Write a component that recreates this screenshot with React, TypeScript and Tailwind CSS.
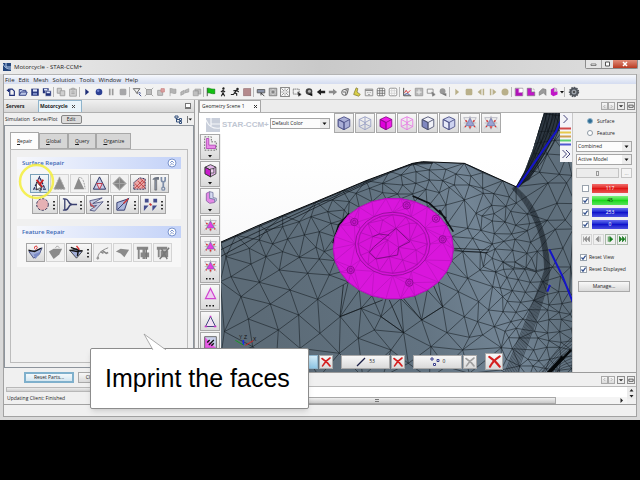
import React, { useState } from 'react';

type Pt = [number, number];

/* ---------- mesh ---------- */

// Bowyer-Watson triangulation
const triangulate = (pts: Pt[]) => {
  const all: Pt[] = [...pts, [-9000, -9000], [9000, -9000], [500, 12000]];
  const n = pts.length;
  const circle = (a: number, b: number, c: number) => {
    const [ax, ay] = all[a];
    const [bx, by] = all[b];
    const [cx, cy] = all[c];
    const d = 2 * (ax * (by - cy) + bx * (cy - ay) + cx * (ay - by)) || 0.001;
    const A = ax * ax + ay * ay, B = bx * bx + by * by, C = cx * cx + cy * cy;
    const x = (A * (by - cy) + B * (cy - ay) + C * (ay - by)) / d;
    const y = (A * (cx - bx) + B * (ax - cx) + C * (bx - ax)) / d;
    return { v: [a, b, c], x, y, r: (ax - x) ** 2 + (ay - y) ** 2 };
  };
  let tris = [circle(n, n + 1, n + 2)];
  for (let i = 0; i < n; i++) {
    const [px, py] = all[i];
    const edges: Record<string, number[]> = {};
    tris = tris.filter((t) => {
      if ((px - t.x) ** 2 + (py - t.y) ** 2 >= t.r) return true;
      [[0, 1], [1, 2], [2, 0]].forEach(([s, e]) => {
        const a = t.v[s], b = t.v[e];
        const key = Math.min(a, b) + '-' + Math.max(a, b);
        if (edges[key]) delete edges[key];
        else edges[key] = [a, b];
      });
      return false;
    });
    Object.values(edges).forEach(([a, b]) => tris.push(circle(a, b, i)));
  }
  // each edge once, so that shared edges are not painted twice
  const seen = new Set<string>();
  let d = '';
  tris.filter((t) => t.v.every((k) => k < n)).forEach((t) => {
    [[0, 1], [1, 2], [2, 0]].forEach(([s, e]) => {
      const a = Math.min(t.v[s], t.v[e]), b = Math.max(t.v[s], t.v[e]);
      if (seen.has(a + '-' + b)) return;
      seen.add(a + '-' + b);
      d += 'M' + all[a].map((q) => Math.round(q)).join(' ') + 'L' + all[b].map((q) => Math.round(q)).join(' ');
    });
  });
  return d;
};

const ring = (cx: number, cy: number, rx: number, ry: number, n: number): Pt[] =>
  Array.from({ length: n }, (_, i) => {
    const a = (i / n) * Math.PI * 2;
    return [cx + rx * Math.cos(a), cy + ry * Math.sin(a)];
  });

const grid = (x0: number, y0: number, x1: number, y1: number, dx: number, dy: number, keep: (x: number, y: number) => boolean): Pt[] => {
  const out: Pt[] = [];
  let row = 0;
  for (let y = y0; y < y1; y += dy, row++) {
    for (let x = x0 + (row % 2) * (dx / 2); x < x1; x += dx) {
      const jx = x + Math.sin(x * 12.9 + y * 7.3) * dx * 0.2;
      const jy = y + Math.sin(x * 3.7 + y * 17.1) * dy * 0.25;
      if (keep(jx, jy)) out.push([jx, jy]);
    }
  }
  return out;
};

const toPoints = (p: Pt[]) => p.map((q) => q.map((v) => Math.round(v)).join(',')).join(' ');

const disc = ring(532, 266, 180, 151, 26);

const bodyPoints: Pt[] = [
  [13, 247], [60, 226], [130, 195], [200, 166], [300, 125], [380, 90], [450, 62], [520, 34], [590, 10], [650, 5], [745, 10], [800, 38], [860, 62], [900, 80],
  [555, 45], [600, 35], [640, 30], [690, 28], [720, 42], [765, 48], [500, 70], [460, 85], [420, 100], [560, 75], [600, 70], [640, 60], [680, 62], [715, 75],
  [500, 98], [545, 102], [590, 102], [630, 88], [670, 98], [700, 82], [745, 120], [690, 135], [780, 160], [755, 205], [770, 235], [760, 75], [800, 85],
  [150, 210], [200, 200], [250, 185], [285, 170], [335, 155], [385, 150], [130, 240], [215, 237], [265, 225], [310, 215], [345, 190], [350, 120], [400, 125], [380, 180],
  [30, 290], [100, 265], [170, 252], [150, 290], [105, 312], [200, 275], [130, 367], [190, 330], [250, 292], [75, 410], [45, 350], [13, 365], [163, 432], [222, 390],
  [275, 340], [305, 418], [248, 465], [97, 477], [25, 515], [187, 510], [312, 520], [252, 565], [373, 470], [370, 580], [110, 560], [310, 297], [300, 262], [340, 345],
  [435, 445], [495, 470], [427, 535], [475, 510], [563, 518], [617, 480], [680, 440], [727, 395], [652, 362], [693, 518], [645, 560], [577, 610], [745, 470], [755, 355],
  [802, 320], [788, 425], [830, 380], [818, 450], [860, 410], [785, 485], [760, 532], [800, 525], [525, 570], [740, 570], [835, 500], [810, 280], [740, 275],
  [13, 600], [180, 620], [310, 650], [440, 650], [60, 650], [500, 650], [690, 620], [640, 655], [760, 640], [325, 275],
  ...grid(800, 105, 985, 330, 42, 28, (x, y) => x < 905 + (y - 80) * 0.45),
  ...grid(860, 330, 1000, 640, 36, 30, (x, y) => x < 1000 - (y - 330) * 0.42),
  ...grid(985, 80, 1090, 400, 56, 46, (x, y) => x > 940 + (y - 80) * 0.28),
  ...grid(880, 400, 1090, 660, 36, 28, (x, y) => x > 1020 - (y - 330) * 0.42),
  ...grid(935, -140, 1090, 80, 44, 44, () => true),
  ...disc,
];

const bodyMesh = triangulate(bodyPoints);
const discMesh = triangulate([
  ...disc,
  ...ring(530, 252, 112, 95, 12),
  ...ring(415, 186, 10, 9, 4), ...ring(572, 136, 10, 9, 4), ...ring(680, 238, 11, 10, 4), ...ring(580, 368, 11, 10, 4), ...ring(404, 330, 11, 10, 4),
]);
const hubMesh = triangulate([
  ...ring(530, 252, 104, 88, 16),
  [470, 230], [490, 222], [460, 275], [480, 295], [520, 290], [548, 262], [582, 240], [540, 205], [515, 240], [500, 180], [580, 190], [600, 270], [560, 300],
]);

const foldLines = Array.from({ length: 9 }, (_, i) => {
  const k = i * 8;
  return `M${896 - i} ${78 + i}C${955 - k / 4} ${120 + i * 2} ${996 - k / 5} 215 ${1002 - k / 4} 330C${990 - k / 2} 420 ${945 - k / 2} 520 ${900 - k * 0.6} 650`;
}).join('');
const cornerLines = Array.from({ length: 9 }, (_, i) => `M1090 ${515 + i * 12}C1040 ${550 + i * 9} 1010 ${595 + i * 4} ${955 + i * 11} 650`).join('');
const towerLines = Array.from({ length: 7 }, (_, i) => `M${985 + i * 9} -145C${962 + i * 12} -60 ${925 + i * 6} 40 ${897 + i * 2} 80`).join('');
const edgeLines = [0, 1, 2].map((i) => `M13 ${250 + i * 20}C150 ${189 + i * 12} 300 ${129 + i * 6} 450 ${63 + i * 4}S590 ${9 + i * 3} 650 ${6 + i * 2}`).join('');

const Scene: React.FC = () => (
  <svg className="absolute inset-0 h-full w-full" viewBox="198 113 376 259" preserveAspectRatio="xMinYMin slice" aria-label="Geometry scene">
    <defs>
      <linearGradient id="sky" x1="0" y1="0" x2="0" y2="1">
        <stop offset="0" stopColor="#fff" />
        <stop offset="1" stopColor="#f0f0f2" />
      </linearGradient>
      <linearGradient id="steel" gradientUnits="userSpaceOnUse" x1="150" y1="500" x2="980" y2="250">
        <stop offset="0" stopColor="#5c6b77" />
        <stop offset="0.5" stopColor="#627381" />
        <stop offset="0.8" stopColor="#738595" />
        <stop offset="1" stopColor="#5f6f7c" />
      </linearGradient>
      <clipPath id="body">
        <path d="M13 247L130 195L300 125L450 62L590 10L620 5L745 10L762 16L900 80L925 35L950 -30L985 -145L1100 -145V660H13Z" />
      </clipPath>
    </defs>
    <rect x="198" y="113" width="376" height="100" fill="#fff" />
    <rect x="198" y="160" width="376" height="212" fill="url(#sky)" />
    <g transform="translate(215 160) scale(.3333)" fill="none">
      <g clipPath="url(#body)">
        <rect x="0" y="-150" width="1100" height="820" fill="url(#steel)" />
        <path d="M985 -145L900 80L940 60L1060 -145Z" fill="#2c3640" />
        <path d={bodyMesh} stroke="#161c22" strokeWidth="2" strokeOpacity=".85" />
        <path d={foldLines + cornerLines} stroke="#141a20" strokeWidth="2" strokeOpacity=".7" />
        <path d={towerLines + edgeLines} stroke="#0b0f13" strokeWidth="2" />
        <path d="M1065 570L1000 640M1040 590L985 650" stroke="#05080a" strokeWidth="7" />
        <path d="M670 150L712 215M351 250L368 195L400 160M590 108L640 130L690 175" stroke="#0c1014" strokeWidth="5" />
        <path d="M715 265L820 270M715 272L815 278M500 420L372 470L382 375M520 420L563 518L495 470M562 415L617 480L680 440L650 370" stroke="#0c1014" strokeWidth="2" />
        <path d="M1040 -130L1020 -85L904 82M1000 268L1040 350L1072 430M1002 375L994 395" stroke="#1414c8" strokeWidth="6" />
      </g>
      <path d="M13 247L130 195L300 125L450 62L590 10L620 5L745 10L900 80" stroke="#0a0d10" strokeWidth="3" />
      <polygon points={toPoints(disc)} fill="#d916dc" stroke="#c010c8" strokeWidth="3" />
      <path d={discMesh} stroke="#b812bd" strokeWidth="2" />
      <polygon points={toPoints(ring(530, 252, 112, 95, 24))} fill="#d714d9" stroke="#9a0fa0" strokeWidth="3" />
      <polygon points={toPoints(ring(530, 252, 104, 88, 20))} stroke="#a510aa" strokeWidth="2" />
      <path d={hubMesh} stroke="#a00e a6" strokeWidth="2" />
      <path d={hubMesh} stroke="#a00ea6" strokeWidth="2" strokeOpacity=".8" />
      <path d="M470 230L490 222L520 226M540 205L582 245L548 262L545 285L480 297L460 278L472 262Z" stroke="#820c88" strokeWidth="3" />
      {([[415, 186], [572, 136], [680, 238], [580, 368], [404, 330], [660, 176]] as Pt[]).map(([x, y]) => (
        <g key={x} stroke="#920c98" strokeWidth="3">
          <circle cx={x} cy={y} r="11" />
          <circle cx={x} cy={y} r="5" />
        </g>
      ))}
      <g strokeWidth="3">
        <path d="M82 555V540" stroke="#1a2ae0" strokeWidth="5" />
        <path d="M82 555L58 541" stroke="#159a20" />
        <path d="M88 556L112 542" stroke="#c22" />
      </g>
    </g>
    <g fontFamily="Liberation Sans, sans-serif" fontSize="5" fill="#111">
      <text x="238" y="339">Y</text>
      <text x="243" y="339">Z</text>
      <text x="252" y="341">X</text>
    </g>
  </svg>
);

/* ---------- icons ---------- */

const navy = '#1f2f78';
const grey = '#9a9a9a';
const tan = '#b9b08a';

const icons: Record<string, React.ReactNode> = {
  fresh: <g fill="none" stroke={navy} strokeWidth="1.4"><path d="M4.500 2.500h3l2.500 2.500v5h-5.500z" /><path d="M1 4h4M3 2v4" /></g>,
  open: <g stroke={navy} fill="#b9c4e4"><path d="M1.500 10V3h3l1 1h4v2" /><path d="M1.500 10L3.500 6h7.500L9.500 10z" /></g>,
  save: <g fill={navy}><path d="M1.500 2h9v8.500h-9z" /><path d="M3.500 2.800h5v2.700h-5z" fill="#dfe6fa" /><path d="M3.500 7h5v2.500h-5z" fill="#7f8fc8" /></g>,
  saveAll: <g><path d="M1 1.500h7v6H1z" fill={navy} /><path d="M2.500 2.200h4v2h-4z" fill="#dfe6fa" /><path d="M4 4.500h7v6.500H4z" fill={navy} stroke="#eee" strokeWidth=".6" /><path d="M5.500 5.500h4v2h-4z" fill="#dfe6fa" /></g>,
  copy: <g fill="#cfcfcf" stroke={grey}><path d="M1.500 1.500h5v6h-5z" /><path d="M5 4.500h5.500v6H5z" /></g>,
  paste: <g fill="#d5d5d5" stroke={grey}><path d="M2 2.500h8v8.500H2z" /><path d="M4.500 1.500h3v2h-3zM4 6h4M4 8h4" /></g>,
  play: <path d="M4 2v8l4.500-4z" fill={navy} />,
  ball: <g><circle cx="6" cy="6" r="4" fill="#2c4094" /><circle cx="5" cy="4.500" r="1.500" fill="#6d80cc" /></g>,
  pause: <path d="M3.500 2h2v8h-2zM7 2h2v8H7z" fill={grey} />,
  stop: <rect x="2" y="2" width="8" height="8" rx="1.500" fill="#a6a6a8" />,
  filter: <g fill="none" stroke="#555"><path d="M1.500 2h8L6.500 6v2L5 7V6z" /><path d="M8 8l3 3M8 6.500l2.500 1" stroke={navy} /></g>,
  crop: <g fill="#bbb" stroke={grey}><path d="M3 3h6v6H3z" /><path d="M1 1l2.500 2.500M11 1L8.500 3.500M1 11l2.500-2.500M11 11L8.500 8.500" /></g>,
  boxRed: <g fill="#c4c4c4" stroke={grey}><path d="M2 4h6v6H2z" /><path d="M6 2h4v4H6z" fill="#dba0a0" stroke="#c88" /></g>,
  flagGrey: <g fill="#b4b4b4" stroke={grey} strokeWidth=".8"><path d="M2.500 1.500V11M2.500 2c3-1 3 1.500 7 .5v5c-4 1-4-1-7-.5" /></g>,
  slices: <g fill="#b9b9b9" stroke={grey} strokeWidth=".8"><path d="M1 10V6l4-2v4zM6 7V4l4.500-2v4z" /></g>,
  cubeGrey: <g fill="#c0c0c0" stroke={grey} strokeWidth=".8"><path d="M1.500 4.500h6v6h-6zM3.500 2.500h7v6h-3v-4h-4z" /></g>,
  flag: <g><path d="M1.500 1v10" stroke="#333" /><path d="M2 1.500c3-.5 3 1.500 8.500 1v5.500C6 8.500 5 6.500 2 7z" fill="#12c212" stroke="#0a7a0a" strokeWidth=".8" /></g>,
  walk: <g stroke="#222" fill="none" strokeWidth="1.300"><circle cx="6.500" cy="1.800" r=".8" fill="#222" /><path d="M6 3.500v3.500l2 4M6 7l-2 4M3.500 6L6 4l2.500 2" /></g>,
  run: <g stroke="#222" fill="none" strokeWidth="1.400"><circle cx="9" cy="2.500" r=".8" fill="#222" /><path d="M8 4L5.500 7l2.500 1v2.500M5.500 7L4 9H1M4 4.500l4-.5 2.500 2" /></g>,
  stopRed: <rect x="2" y="2" width="8.500" height="8.500" fill="#b58a8c" stroke="#967074" strokeWidth=".8" />,
  camera: <g stroke="#555"><path d="M1.500 3h9v4h-9z" fill="#8a93a8" /><path d="M6 7l4 4M6 7v3" fill="none" stroke="#222" /></g>,
  fit: <g fill="#bbb" stroke="#777"><path d="M1.500 1.500h9v9h-9z" /><path d="M6 2.500v7M2.500 6h7" stroke="#fff" strokeWidth="2" /><path d="M6 3v6M3 6h6" stroke="#444" /></g>,
  burst: <g fill="none" stroke="#333"><path d="M.5.500h11v11H.5z" fill="#f8f8f8" stroke="#666" /><path d="M2 2l3 3M10 2L7 5M2 10l3-3M10 10L7 7M6 2v2M6 8v2M2 6h2M8 6h2" strokeDasharray="1 .6" /></g>,
  marquee: <g fill="none" stroke="#555"><path d="M1.500 2.500h7v6h-7z" strokeDasharray="1.500 .8" /><path d="M7 6l4 3-3 2z" fill="#111" /></g>,
  spin: <g><circle cx="6" cy="5.500" r="4" fill="#444" /><circle cx="6.500" cy="5" r="1.800" fill="#b6b6b6" /><path d="M5 9l5 2V7.500z" fill="#111" /></g>,
  left: <path d="M1 6l5-4v2.500h5v3H6V10z" fill="#222" />,
  right: <path d="M11 6L6 2v2.500H1v3h5V10z" fill="#8b8b8b" />,
  rotate: <g fill="none" stroke="#666" strokeWidth="1.200"><circle cx="5.500" cy="6.500" r="3.500" /><path d="M3 6h4v4M5 3l5-1-1 5" /></g>,
  broom: <g><path d="M5 1l2 1-1 4 4 3-2 2-6-2 1-3z" fill="#d9cf48" stroke="#77702a" strokeWidth=".8" /></g>,
  calendar: <g fill="#ececec" stroke="#888"><path d="M1.500 2.500h9v8h-9z" /><path d="M1.500 4h9" strokeWidth="1.500" /><path d="M4 6l1 1M8 6L7 7M5 9h2" /></g>,
  table: <g fill="#fff" stroke="#666"><rect x="1.500" y="1.500" width="9" height="9" rx="1.500" /><path d="M1.500 4.500h9M1.500 7.500h9M4.500 1.500v9M7.500 1.500v9" /></g>,
  tablePale: <g fill="#fff" stroke="#777"><rect x="1.500" y="1.500" width="9" height="9" rx="1.500" /><path d="M1.500 4.500h9M1.500 7.500h9M4.500 1.500v9M7.500 1.500v9" stroke="#cfcfcf" /></g>,
  plot: <g fill="none" stroke="#333"><path d="M2 1v9.500h9" /><path d="M3 7l2-3 2 3 3-3" stroke="#c22" /><path d="M3 9l3-1 3 1" stroke={navy} /></g>,
  fitGrey: <g fill="#b8b8b8" stroke="#999"><path d="M1.500 1.500h9v9h-9z" /><path d="M6 3v6M3 6h6" stroke="#e8e8e8" strokeWidth="1.500" /></g>,
  marqueeGrey: <g fill="none" stroke="#888"><path d="M1.500 2.500h7v5h-7z" /><path d="M7 6l4 3-3 2z" fill="#777" /></g>,
  spinGrey: <g><circle cx="5.500" cy="5" r="3.500" fill="#999" /><path d="M4 8l6 3V7.500z" fill="#777" /></g>,
  tanPlay: <path d="M4 2v8l4.500-4z" fill={tan} />,
  tanStop: <rect x="2" y="2" width="8" height="8" rx="1.500" fill={tan} />,
  tanBack: <path d="M6.500 2v8L2 6zM8 2h1.800v8H8z" fill={tan} />,
  tanFwd: <path d="M5.500 2v8L10 6zM2.200 2H4v8H2.200z" fill={tan} />,
  tanBall: <circle cx="6" cy="6" r="4.200" fill={tan} />,
  magA: <g><path d="M1.500 1.500h9v9h-9z" fill="#e9b6ec" stroke="#777" strokeWidth=".8" /><path d="M2 2h3.500v5H10v3.500H2z" fill="#b015b8" /><path d="M6.500 2h4v4h-4z" fill="#fff" /></g>,
  magB: <g><path d="M1.500 1.500h5V6h4v4.500h-9z" fill="#c117c8" stroke="#777" strokeWidth=".8" /><path d="M6.500 2.500h3.500v3" fill="none" stroke="#999" strokeDasharray="1 1" /></g>,
  blob: <path d="M1.500 10V6l4-4 4 1v7l-3-3z" fill="#9b9b9b" stroke="#777" strokeWidth=".8" />,
  magC: <g><path d="M1 3l4-2v5l4-1v4l-5 2-3-2z" fill="#c117c8" /><path d="M5 1l3 1v3L5 6z" fill="#eab8ee" stroke="#888" strokeWidth=".6" /></g>,
  gear: <g><circle cx="6" cy="6" r="4.400" fill="#50555c" stroke="#50555c" strokeWidth="1.600" strokeDasharray="1.500 1" /><circle cx="6" cy="6" r="2.500" fill="#9aa0a8" /><circle cx="6" cy="6" r="1" fill="#333" /></g>,
};

const Icon: React.FC<{ name: string; size?: string }> = ({ name, size = 'h-[10px] w-[10px]' }) => (
  <svg className={size} viewBox="0 0 12 12" aria-hidden="true">{icons[name]}</svg>
);

const toolGroups = [
  ['fresh', 'open', 'save', 'saveAll'],
  ['copy', 'paste'],
  ['play', 'ball', 'pause', 'stop'],
  ['filter', 'crop', 'boxRed', 'flagGrey', 'slices', 'cubeGrey'],
  ['flag', 'walk', 'run', 'stopRed'],
  ['camera', 'fit', 'burst', 'marquee', 'spin', 'left', 'right', 'rotate', 'broom', 'calendar', 'table', 'tablePale'],
  ['plot', 'fitGrey', 'marqueeGrey', 'spinGrey'],
  ['tanPlay', 'tanStop', 'tanBack', 'tanFwd', 'tanBall'],
  ['magA', 'magB', 'blob', 'magC'],
];

// 18x18 drawings for the repair buttons
const repairIcons: Record<string, React.ReactNode> = {
  triX: <g fill="#c9d0e8" stroke="#222a5a"><path d="M9 2L3 15h12z" strokeDasharray="3 1" strokeWidth="1.300" /><path d="M6 5l6 8M13 5l-6 8" stroke="#c22" strokeWidth="2" /></g>,
  triGrey: <path d="M9 2L3 15h12z" fill="#8b8b8b" stroke="#aaa" strokeDasharray="2 1" />,
  triGreyX: <g><path d="M8 3L3 15h11z" fill="#8b8b8b" /><path d="M8 3c4-2 6 4 7 12" fill="none" stroke="#999" strokeDasharray="2 1" /></g>,
  triSplit: <g fill="#c3cbe6" stroke="#222a5a"><path d="M9 2L2.500 15h13z" /><path d="M6 9h6L9 15z" fill="#ecd0dc" stroke="#b34" /></g>,
  diamond: <g><path d="M9 2l7 7-7 7-7-7z" fill="#858585" stroke="#a8a8a8" /><path d="M2 9h14M9 2v14" stroke="#a5a5a5" /></g>,
  patch: <g><path d="M3 15V8l6-5 6 1v11z" fill="#e9a9a9" stroke="#222a5a" strokeDasharray="2 1" /><path d="M4 14l9-9M7 14l8-8M11 14l4-4M4 9l5 5M7 6l8 8M10 4l5 5" stroke="#b33" strokeWidth=".8" /></g>,
  tools: <g><path d="M4 5h2v11H4z" fill="#8c96a8" stroke="#555" strokeWidth=".6" /><path d="M1.500 5c1-3 4-3 7-3v3H3z" fill="#6c7482" /><path d="M11 2v3c0 3 4 3 4 0V2M13 7v6" fill="none" stroke="#7d8da8" strokeWidth="1.800" /><circle cx="13" cy="14.500" r="1.600" fill="none" stroke="#7d8da8" strokeWidth="1.400" /></g>,
  circle: <circle cx="9" cy="9" r="6.200" fill="#e5b1b4" stroke="#2b2d52" strokeDasharray="2.500 1.500" />,
  merge: <g fill="none" stroke="#3a4070"><path d="M2 3h2c5 0 3 6 8 6h5M2 15h2c5 0 3-6 8-6M4 3v12" strokeWidth="1.400" /></g>,
  zip: <g fill="#c6cbe0" stroke="#3a4070" strokeWidth=".8"><path d="M2 5l13-3-10 6 11-2-9 10-5-1 7-5-6 1z" /><path d="M2 7l4 4M2 9l5 3" stroke="#c33" /></g>,
  edge: <g><path d="M2 15V7l12-4-4 12z" fill="#aeb8dc" stroke="#30386c" /><path d="M3 14L15 2" stroke="#30386c" /><path d="M9 8l5-5" stroke="#c33" strokeWidth="1.500" /></g>,
  shapes: <g fill="#444c8c"><path d="M3 3h4v4H3zM12 3h4v4h-4zM2 10h5l-5 6zM16 10h-5v6z" /><path d="M8 8l2 2" stroke="#c33" strokeWidth="2" /></g>,
  fold: <g><path d="M2 8l7-1 7-3-3 7-6 4z" fill="#a3afd8" stroke="#30386c" strokeWidth=".8" /><path d="M1.500 6.500L8 8l7-3.500" stroke="#111" strokeWidth="1.400" fill="none" /><path d="M7 11l2 5 6-8z" fill="#7c8cc8" /><path d="M8 5V3l2-1 1 2-2 2" stroke="#d33" fill="none" /></g>,
  foldGrey: <g><path d="M2 8l5-3h9l-3 6-6 5z" fill="#8b8b8b" /><path d="M9 4l2-2 2 2" fill="none" stroke="#999" /></g>,
  foldRed: <g><path d="M2 7l7 8 6-7-6-3z" fill="#a3afd8" stroke="#222" strokeWidth=".8" /><path d="M1.500 6.500l8 1.500 6-1M3 3.500l8 3-1 6" stroke="#111" strokeWidth="1.500" fill="none" /><path d="M9 2l3 4" stroke="#d33" strokeWidth="1.500" /></g>,
  curve: <g fill="none" stroke="#888"><path d="M4 16c0-6 3-9 11-12" /><path d="M7 8l3 2M9 7l4 3 2-1" strokeWidth="1.600" /><circle cx="4" cy="15" r="1" /></g>,
  leaf: <path d="M2 8l5-3 9 1-5 8-4-4z" fill="#8b8b8b" />,
  caliper: <g fill="#868686"><path d="M3 3h12v3H3zM4 6h2v10H4zM9 5h3v11H9zM7 9h9v5H7z" /><path d="M13 5v11" stroke="#777" strokeWidth="1.500" /></g>,
  caliperX: <g fill="#868686"><path d="M3 3h11v3H3zM4 6h2v8H4zM7 7h8v7H7z" /><path d="M6 16L16 4M8 5l6 11" stroke="#777" strokeWidth="1.500" /></g>,
};

/* ---------- shared bits ---------- */

const bevel = 'border border-[#a9a9a9] bg-linear-to-b from-[#f8f8f8] to-[#dadada]';

const RepairButton: React.FC<{ name: string; off?: boolean; menu?: boolean; active?: boolean }> = ({ name, off, menu, active }) => (
  <button
    aria-label={name}
    className={`flex h-[19px] items-center justify-center ${menu ? 'w-[26px]' : 'w-[19px]'} border ${off ? 'border-[#d4d4d4] bg-[#f2f2f2]' : active ? 'border-[#7aa0b8] bg-linear-to-b from-[#f4f8fa] to-[#cfe0ea]' : 'border-[#a4a4a4] bg-linear-to-b from-[#f8f8f8] to-[#dadada]'}`}
  >
    <svg className="h-[17px] w-[17px]" viewBox="0 0 18 18" aria-hidden="true">{repairIcons[name]}</svg>
    {menu && (
      <svg className="ml-px h-3 w-1" viewBox="0 0 4 12" fill="#333" aria-hidden="true">
        <path d="M1 2h2v1.500H1zM1 5.500h2V7H1zM1 9h2v1.500H1z" />
      </svg>
    )}
  </button>
);

const RepairGroup: React.FC<{ title: string; children: React.ReactNode }> = ({ title, children }) => (
  <section className="bg-[#f7f7f7] pb-[5px]">
    <div className="flex h-[12px] items-center justify-between bg-linear-to-r from-[#f7f8fc] to-[#c3d2f8] pr-1 pl-[5px]">
      <h2 className="text-[6px] leading-none font-semibold text-[#3c68b4]">{title}</h2>
      <button aria-label={'Collapse ' + title}>
        <svg className="h-[10px] w-[10px]" viewBox="0 0 10 10" fill="none" stroke="#7a94cc">
          <circle cx="5" cy="5" r="4" fill="#fff" />
          <path d="M3.200 4.800L5 3l1.800 1.800M3.200 7.200L5 5.400l1.800 1.800" />
        </svg>
      </button>
    </div>
    <div className="mt-[5px] flex flex-col items-center gap-[2px]">{children}</div>
  </section>
);

const Check: React.FC<{ id: string; on: boolean }> = ({ id, on }) => (
  <span className="grid h-[7px] w-[7px] shrink-0">
    <input id={id} type="checkbox" defaultChecked={on} className="peer col-start-1 row-start-1 h-[7px] w-[7px] appearance-none border border-[#9aa3ad] bg-white" />
    <svg className="pointer-events-none invisible col-start-1 row-start-1 h-[7px] w-[7px] peer-checked:visible" viewBox="0 0 7 7">
      <path d="M1.500 3.500L3 5.200L5.600 1.600" fill="none" stroke="#33508c" strokeWidth="1.200" />
    </svg>
  </span>
);

const Drop: React.FC<{ label: string; value: string; className: string }> = ({ label, value, className }) => (
  <span className={`grid items-center ${className}`}>
    <select aria-label={label} className="col-start-1 row-start-1 h-[11px] w-full appearance-none border border-[#a6a6a6] bg-[#fcfcfc] pl-px leading-none">
      <option>{value}</option>
    </select>
    <svg className="pointer-events-none col-start-1 row-start-1 mr-px h-[9px] w-[9px] justify-self-end bg-[#ececec]" viewBox="0 0 9 9">
      <path d="M2.500 3.500h4l-2 2.500z" fill="#111" />
    </svg>
  </span>
);

const WindowTools: React.FC = () => (
  <div className="flex items-center gap-[2px]">
    <div className="flex">
      {['M4.500 1.500L2.500 3.500l2 2', 'M2.500 1.500l2 2-2 2'].map((d) => (
        <button key={d} aria-label="Scroll tabs" className={`h-[8px] w-[7px] ${bevel}`}>
          <svg viewBox="0 0 7 7" fill="none" stroke="#999"><path d={d} /></svg>
        </button>
      ))}
    </div>
    <button aria-label="Tab list" className="h-[8px] w-[8px] border border-[#8d8d8d] bg-[#ececec]">
      <svg viewBox="0 0 7 7"><path d="M1 2.500h5L3.500 5z" fill="#222" /></svg>
    </button>
    <button aria-label="Maximize" className="h-[8px] w-[8px] border border-[#8d8d8d] bg-[#ececec]">
      <svg viewBox="0 0 7 7" fill="#fff" stroke="#444"><path d="M1 2.500h5v2.500h-5z" /></svg>
    </button>
  </div>
);

/* ---------- panels ---------- */

const menus = ['File', 'Edit', 'Mesh', 'Solution', 'Tools', 'Window', 'Help'];
const tabs = ['Repair', 'Global', 'Query', 'Organize'];

const LeftPanel: React.FC = () => {
  const [tab, setTab] = useState('Repair');
  return (
    <aside className="flex w-[191px] shrink-0 flex-col border-r border-[#a2a2a2]">
      <div className="flex h-[13px] items-end justify-between border-b border-[#b0b0b0] bg-linear-to-b from-[#f0f0f0] to-[#d8d8d8]">
        <div className="flex h-[12px] font-bold">
          <button className="w-[34px] pl-[2px] text-left">Servers</button>
          <button className="flex w-[44px] items-center gap-[3px] border border-b-0 border-[#8fb4cc] bg-[#eaf4fa] pl-px">
            Motorcycle
            <svg className="h-[5px] w-[5px]" viewBox="0 0 5 5" stroke="#444"><path d="M1 1l3 3M4 1L1 4" /></svg>
          </button>
        </div>
        <button aria-label="Minimize panel" className="mr-[3px] mb-[3px] h-[6px] w-[6px] border border-b-2 border-[#777] bg-white" />
      </div>
      <div className="flex h-[12px] items-center gap-[3px] bg-[#f0f0f0] pl-px">
        <span>Simulation</span>
        <span>Scene/Plot</span>
        <button className="h-[9px] w-[21px] rounded-xs border border-[#858585] bg-[#dcdcdc] leading-none">Edit</button>
        <span className="flex-1" />
        <button aria-label="Tree options" className="mr-[2px] h-[9px] w-[18px]">
          <svg viewBox="0 0 18 9" fill="none" stroke="#34507c">
            <path d="M1 1h3v2H1zM2.500 3v4h3M2.500 4.500h3M5.500 3.500h2v2h-2zM5.500 6.500h2v2h-2z" />
            <path d="M13.500 1v7" stroke="#777" />
            <path d="M14.500 3.500h3.500l-1.700 2z" fill="#111" stroke="none" />
          </svg>
        </button>
      </div>
      <div className="flex flex-1 flex-col border border-[#8d949c] bg-[#f0f0f0] px-[5px] pt-[6px] pb-1">
        <div className="flex h-[17px] items-end" role="tablist">
          {tabs.map((t) => (
            <button
              key={t}
              role="tab"
              aria-selected={t === tab}
              onClick={() => setTab(t)}
              className={`border border-[#a8a8a8] px-[6px] ${t === tab ? 'h-[17px] border-b-0 bg-[#fdfdfd]' : 'h-[16px] bg-[#d6d6d6]'}`}
            >
              <span className="underline">{t[0]}</span>{t.slice(1)}
            </button>
          ))}
        </div>
        <div className="flex flex-1 flex-col gap-[7px] border border-[#bcbcbc] px-[6px] pt-[7px]">
          <RepairGroup title="Surface Repair">
            <div className="flex gap-px">
              <RepairButton name="triX" active />
              <RepairButton name="triGrey" off />
              <RepairButton name="triGreyX" off />
              <RepairButton name="triSplit" />
              <RepairButton name="diamond" off />
              <RepairButton name="patch" />
              <RepairButton name="tools" />
            </div>
            <div className="flex gap-px">
              {['circle', 'merge', 'zip', 'edge', 'shapes'].map((n) => <RepairButton key={n} name={n} menu />)}
            </div>
          </RepairGroup>
          <RepairGroup title="Feature Repair">
            <div className="flex gap-px">
              <RepairButton name="fold" />
              <RepairButton name="foldGrey" off />
              <RepairButton name="foldRed" menu />
              <RepairButton name="curve" off />
              <RepairButton name="leaf" off />
              <RepairButton name="caliper" off />
              <RepairButton name="caliperX" off />
            </div>
          </RepairGroup>
        </div>
      </div>
      <div className="flex h-[19px] items-center gap-1 pl-5">
        <button className="h-[11px] w-[50px] border-2 border-[#7fb0cc] bg-linear-to-b from-[#f4f9fc] to-[#d3e6f0] leading-none">Reset Parts...</button>
        <button className={`h-[11px] w-[28px] leading-none ${bevel}`}>Close</button>
      </div>
      <div className="mx-[2px] h-[5px] border border-[#b8b8b8] bg-linear-to-b from-[#ececec] to-[#cfcfcf]" />
      <p className="flex h-[13px] items-center border-b border-[#a2a2a2] pl-[3px]">Updating Client: Finished</p>
    </aside>
  );
};

const cube = (fill: string, line: string, side?: string) => (
  <g stroke={line} strokeLinejoin="round" fill={fill}>
    <path d="M9 2l6.500 3v8L9 16.500L2.500 13V5z" />
    <path d="M2.500 5L9 8.500v8L2.500 13z" fill={side || fill} />
    <path d="M2.500 5L9 8.500L15.500 5M9 8.500v8" fill="none" />
  </g>
);
const wire = (line: string) => (
  <g stroke={line} fill="none" strokeLinejoin="round">
    <path d="M9 2l6.500 3v8L9 16.500L2.500 13V5zM2.500 5L9 8.500L15.500 5M9 8.500v8M9 2v8L2.500 13M9 10l6.500 3" />
  </g>
);
const starTri = (fill: string) => (
  <g>
    <path d="M2 3h14M2 3l7 13 7-13M2 15L9 3l7 12M9 1v4M2 9h14" fill="none" stroke="#a7a7b4" strokeWidth=".8" />
    <path d="M9 4l4.500 8h-9z" fill={fill} stroke="#5a5f98" strokeWidth=".6" />
    <path d="M4 6l1.500 1.500M14 6l-1.500 1.500M9 12.500V15M4.500 12.500l-1 1M13.500 12.500l1 1" stroke="#d33" strokeWidth="1.600" />
  </g>
);

const viewButtons = [
  cube('#a9aed6', '#4a4f86'), wire('#9aa0c4'), cube('#f01ce8', '#8c0c8c', '#e000dc'), wire('#e77be4'),
  cube('#f0f1f8', '#4d5170', '#8088c0'), cube('#cdd3f0', '#4a4f86', '#e6e9f8'), starTri('#9aa2d4'), starTri('#9aa2d4'),
];

const sideButtons: { art: React.ReactNode; more?: string }[] = [
  { art: <g><path d="M4 3h3v8h8v4H4z" fill="#e88ce8" stroke="#b040b4" /><path d="M2 1h8v6h6v10H2z" fill="none" stroke="#555" strokeDasharray="2 1.500" /></g>, more: 'arrow' },
  { art: <g>{cube('#e0b4e6', '#333', '#c81ccc')}<path d="M9 7h4v5H9z" fill="#f0d0f2" stroke="#333" strokeWidth=".8" /></g>, more: 'arrow' },
  { art: <g><path d="M4 4l4-2v8l6 1v4l-6 1-4-3z" fill="#e48ae6" stroke="#8b5fa4" /><path d="M8 2l4 1v6l4 1v3l-2 1v-3l-6-1z" fill="#d6daf0" stroke="#777ca4" /></g>, more: 'arrow' },
  { art: starTri('#e83ce4') },
  { art: starTri('#e83ce4') },
  { art: starTri('#e83ce4'), more: 'dots' },
  { art: <path d="M9 3l6 12H3z" fill="#eecdf0" stroke="#d044d0" strokeWidth="1.500" />, more: 'dots' },
  { art: <g><path d="M9 3l6 12H3z" fill="#f2e0f4" stroke="#444a80" strokeWidth="1.200" /><path d="M2 14h3v2H2zM13 14h3v2h-3zM8 2h2v2H8z" fill="#c830c8" /></g> },
  { art: <g><path d="M2 2h14v14z" fill="#c9d0ea" /><path d="M2 2v14h14z" fill="#e65ae4" /><path d="M2 2h14v14H2z" fill="none" stroke="#555" /><path d="M5 9l3-3M7 12l6-6M10 13l3-3" stroke="#111" strokeWidth="1.600" /></g> },
];

const RedX: React.FC<{ color?: string; big?: boolean }> = ({ color = '#d42020', big }) => (
  <button aria-label="Clear selection" className={`flex items-center justify-center ${big ? 'h-[17px] w-[18px]' : 'h-[14px] w-[14px]'} ${bevel}`}>
    <svg className={big ? 'h-[13px] w-[13px]' : 'h-[10px] w-[10px]'} viewBox="0 0 10 10" stroke={color} strokeWidth="1.600" strokeLinecap="round" fill="none">
      <path d="M1 1.500C4 3.500 7 6 9 9M9 1C6 3 3 6 1.500 9" />
    </svg>
  </button>
);

const SceneView: React.FC = () => (
  <div className="relative min-w-0 flex-1 overflow-hidden bg-white">
    <Scene />
    <div className="relative flex h-[21px] items-start">
      <div className="flex w-[71px] shrink-0 items-center gap-[2px] pt-[5px] pl-[7px] text-[#c0c6d2]">
        <svg className="h-[14px] w-[14px] shrink-0" viewBox="0 0 14 14">
          <path d="M0 0h14v14H0z" fill="#c9cfdb" />
          <path d="M0 2c3 7 7 9 14 8M5 0v8M5 6h9" stroke="#f5f7fa" strokeWidth="1.200" fill="none" />
        </svg>
        <span className="font-['Liberation_Sans',sans-serif] text-[8px] leading-none font-bold whitespace-nowrap">STAR-CCM+</span>
      </div>
      <Drop label="Color mode" value="Default Color" className="mt-[5px] w-[60px] shrink-0" />
      <div className="ml-1 flex shrink-0 gap-px">
        {viewButtons.map((art, i) => (
          <button key={i} aria-label={'View mode ' + (i + 1)} className={`flex h-[20px] w-[20px] items-center justify-center ${bevel}`}>
            <svg className="h-[16px] w-[16px]" viewBox="0 0 18 18">{art}</svg>
          </button>
        ))}
      </div>
    </div>
    <div className="relative flex w-[22px] flex-col items-center gap-px bg-[#f0f0f0]">
      {sideButtons.map((b, i) => (
        <button key={i} aria-label={'Selection tool ' + (i + 1)} className={`flex w-[20px] flex-col items-center justify-around ${b.more ? 'h-[26px]' : 'h-[20px]'} ${bevel}`}>
          <svg className="h-[15px] w-[15px]" viewBox="0 0 18 18">{b.art}</svg>
          {b.more && (
            <svg className="h-1 w-2" viewBox="0 0 8 4" fill="#111">
              <path d={b.more === 'arrow' ? 'M2 1h4L4 3.500z' : 'M0 1h1.500v1.500H0zM3.200 1h1.500v1.500H3.200zM6.500 1H8v1.500H6.500z'} />
            </svg>
          )}
        </button>
      ))}
    </div>
    <div className="absolute bottom-[2px] left-[70px] flex items-center gap-2">
      <div className="flex gap-px">
        <button aria-label="Selected faces" className="h-[14px] w-[49px] border border-[#8db4cc] bg-linear-to-b from-[#d4ecf8] to-[#8fc6e4]" />
        <RedX />
      </div>
      <div className="flex gap-px">
        <button className={`flex h-[14px] w-[49px] items-center justify-center gap-[3px] ${bevel}`}>
          <svg className="h-[10px] w-[10px]" viewBox="0 0 10 10"><path d="M1 9l8-8" stroke="#1b1f44" strokeWidth="1.300" /></svg>
          53
        </button>
        <RedX />
      </div>
      <div className="flex gap-px">
        <button className={`flex h-[14px] w-[49px] items-center justify-center gap-[3px] ${bevel}`}>
          <svg className="h-[10px] w-[10px]" viewBox="0 0 10 10" fill="#fff" stroke="#3a3f8c"><path d="M1 1h2v2H1zM7 2.500h2v2H7zM3.500 6.500h2v2h-2z" /></svg>
          0
        </button>
        <RedX color="#a0a0a0" />
      </div>
      <RedX big />
    </div>
    <div className="absolute top-0 right-0 flex w-[12px] flex-col items-center bg-[#f4f4f8] pb-[3px]">
      <svg className="h-[46px] w-[12px]" viewBox="0 0 12 46" fill="none" stroke="#44447a">
        <path d="M3.500 2l4 4-4 4" />
        <g strokeWidth="2">
          <path d="M0 15.500h11" stroke="#d04848" />
          <path d="M0 19.500h11" stroke="#e6c84c" />
          <path d="M0 23.500h11" stroke="#d0a050" />
          <path d="M0 27.500h11" stroke="#5cd070" />
          <path d="M0 31.500h11" stroke="#5058d0" />
        </g>
        <path d="M2.500 37l4 4-4 4M6 37l4 4-4 4" />
      </svg>
    </div>
  </div>
);

const layers = [
  { count: '117', bar: 'from-[#f06a6a] via-[#e01414] to-[#e85050] text-white', on: false },
  { count: '45', bar: 'from-[#7cf07c] via-[#18d818] to-[#54e454] text-[#113311]', on: true },
  { count: '253', bar: 'from-[#6a6af0] via-[#1212cc] to-[#4c4ce0] text-white', on: true },
  { count: '0', bar: 'from-[#6a6af0] via-[#1212cc] to-[#4c4ce0] text-white', on: true },
];

const steps = [
  { name: 'First', d: 'M2 2v7M6 2v7L3 5.500zM10 2v7L7 5.500z', color: '#8f8f8f' },
  { name: 'Previous', d: 'M6 2v7L2.500 5.500zM8 2v7', color: '#8f8f8f' },
  { name: 'Next', d: 'M3 2v7M5 2v7L9 5.500z', color: '#167a1c' },
  { name: 'Last', d: 'M2 2v7L5 5.500zM6 2v7L9 5.500zM10 2v7', color: '#167a1c' },
];

const Options: React.FC = () => (
  <aside className="flex w-[64px] shrink-0 flex-col border-l border-[#c8c8c8] bg-[#f0f0f0] pr-[4px] pl-[3px]">
    {['Surface', 'Feature'].map((r, i) => (
      <div key={r} className={`flex h-[12px] items-center gap-1 pl-[11px] ${i === 0 ? 'mt-[2px]' : ''}`}>
        <input id={r} type="radio" name="kind" defaultChecked={i === 0} className="h-[6px] w-[6px] appearance-none rounded-full border border-[#8d99a4] bg-white checked:border-[#8fb2c8] checked:bg-[#2d6c94]" />
        <label htmlFor={r}>{r}</label>
      </div>
    ))}
    <Drop label="Combine mode" value="Combined" className="mt-[2px] w-full" />
    <Drop label="Model" value="Active Model" className="mt-[2px] w-full" />
    <div className="mt-[3px] flex gap-[2px]">
      <button aria-label="Range" className="flex h-[10px] flex-1 items-center justify-center border border-[#c4c4c4] bg-[#ececec]">
        <span className="h-[5px] w-[3px] border border-[#999]" />
      </button>
      <button className="h-[10px] w-[11px] border border-[#c4c4c4] bg-[#f4f4f4] leading-none text-[#888]">...</button>
    </div>
    <div className="mt-1 flex flex-col">
      {layers.map((l, i) => (
        <div key={i} className="flex h-[12px] items-center gap-[3px] pl-[6px]">
          <Check id={'layer' + i} on={l.on} />
          <label htmlFor={'layer' + i} className={`mr-[4px] flex h-[9px] flex-1 items-center justify-center bg-linear-to-b ${l.bar}`}>{l.count}</label>
        </div>
      ))}
    </div>
    <div className="mt-[4px] flex justify-center gap-px">
      {steps.map((s) => (
        <button key={s.name} aria-label={s.name} className={`h-[11px] w-[11px] border bg-[#f0f0f0] ${s.color === '#167a1c' ? 'border-[#a8b8a8]' : 'border-[#d4d4d4]'}`}>
          <svg viewBox="0 0 12 11" stroke={s.color} fill={s.color}><path d={s.d} /></svg>
        </button>
      ))}
    </div>
    {['Reset View', 'Reset Displayed'].map((c, i) => (
      <div key={c} className={`flex h-[12px] items-center gap-[2px] pl-[4px] ${i === 0 ? 'mt-[6px]' : ''}`}>
        <Check id={c} on />
        <label htmlFor={c} className="whitespace-nowrap">{c}</label>
      </div>
    ))}
    <button className={`mx-[2px] mt-[6px] h-[11px] leading-none ${bevel}`}>Manage...</button>
  </aside>
);

const OutputPane: React.FC = () => (
  <div className="flex h-[33px] shrink-0 flex-col border-t border-b border-[#9c9c9c]">
    <div className="flex h-[14px] items-center justify-end border-b border-[#b8b8b8] pr-px">
      <WindowTools />
    </div>
    <div className="flex flex-1">
      <div className="flex flex-1 flex-col">
        <div className="flex-1 bg-white" />
        <div className="flex h-[7px] items-center bg-[#f4f4f4]">
          <div className="flex h-full w-5/6 items-center justify-center border border-[#a8a8a8] bg-linear-to-b from-[#f0f0f0] to-[#c9c9c9]">
            <span className="h-[3px] w-1 border-y border-[#777]" />
          </div>
          <span className="flex-1" />
          <svg className="mr-[3px] h-[5px] w-[5px]" viewBox="0 0 5 5"><path d="M1.500 0v5L4 2.500z" fill="#222" /></svg>
        </div>
      </div>
      <svg className="h-[12px] w-[9px] bg-[#ececec]" viewBox="0 0 9 12" fill="#222"><path d="M2.500 4.500h4l-2-2.500zM2.500 8h4l-2 2.500z" /></svg>
    </div>
  </div>
);

const App: React.FC = () => (
  <div className="flex min-h-screen flex-col bg-black py-[60px] font-['Open_Sans','Noto_Sans',sans-serif] text-[5px] leading-none text-[#1c1c1c]">
    <div className="relative flex flex-1 flex-col bg-[#d9d9d9] px-[3px] pb-[3px]">
      <header className="-mx-[3px] flex h-[14px] items-start justify-between bg-linear-to-r from-[#ececec] via-[#c9c9c9] to-[#dedede] pr-[2px] pl-[3px]">
        <div className="flex h-[13px] items-center gap-[3px]">
          <svg className="h-2 w-2" viewBox="0 0 8 8">
            <path d="M0 0h8v8H0z" fill="#23457c" />
            <path d="M0 1c2 4 4 5 8 5M3 0v4h5" stroke="#bcd3f0" fill="none" />
          </svg>
          <h1 className="text-[6px]">Motorcycle - STAR-CCM+</h1>
        </div>
        <div className="flex h-[9px] rounded-b-xs border border-t-0 border-[#8c8c8c]">
          <button aria-label="Minimize" className="w-[16px] border-r border-[#a0a0a0] bg-[#e4e4e4]">
            <svg viewBox="0 0 15 8"><path d="M5 4h5v1.500H5z" fill="#fff" stroke="#555" strokeWidth=".7" /></svg>
          </button>
          <button aria-label="Restore" className="w-[11px] bg-[#e4e4e4]">
            <svg viewBox="0 0 11 8"><path d="M3.500 2h4v4h-4z" fill="#fff" stroke="#555" /></svg>
          </button>
          <button aria-label="Close window" className="w-[24px] bg-linear-to-b from-[#e08c78] to-[#b83820]">
            <svg viewBox="0 0 24 8"><path d="M10 2l4 4M14 2l-4 4" stroke="#fff" strokeWidth="1.500" /></svg>
          </button>
        </div>
      </header>
      <div className="flex flex-1 flex-col border-x border-b border-[#a2a2a2] bg-[#f0f0f0]">
        <nav className="flex h-[10px] items-center gap-1 border-t border-[#b4b4b4] bg-linear-to-b from-[#f6f8fc] to-[#d4dcf0] pl-px text-[6px]">
          {menus.map((m) => <button key={m} className="leading-none">{m}</button>)}
        </nav>
        <div className="flex h-[16px] items-center overflow-hidden border-b border-[#c4c4c4] bg-[#f2f2f2] pl-px">
          {toolGroups.map((group, g) => (
            <div key={g} className="flex shrink-0 items-center">
              {group.map((name) => (
                <button key={name} aria-label={name} className="flex w-[12px] justify-center"><Icon name={name} /></button>
              ))}
              {g === 8 && <svg className="-ml-px h-1 w-1" viewBox="0 0 4 4"><path d="M0 1h4L2 3.500z" fill="#111" /></svg>}
              <span className="mr-px h-[10px] w-px bg-[#b8b8b8]" />
            </div>
          ))}
          <button aria-label="Settings" className="ml-[2px]"><Icon name="gear" size="h-[12px] w-[12px]" /></button>
        </div>
        <div className="flex flex-1">
          <LeftPanel />
          <main className="ml-[3px] flex min-w-0 flex-1 flex-col border-l border-[#a2a2a2]">
            <div className="flex h-[13px] items-end justify-between border-b border-[#b0b0b0] bg-[#ececec] pr-px">
              <button className="flex h-[12px] w-[62px] items-center justify-between border border-b-0 border-[#a6a6a6] bg-[#fafafa] px-[2px]">
                Geometry Scene 1
                <svg className="h-[5px] w-[5px]" viewBox="0 0 5 5" stroke="#333"><path d="M1 1l3 3M4 1L1 4" /></svg>
              </button>
              <div className="pb-[2px]"><WindowTools /></div>
            </div>
            <div className="flex flex-1">
              <SceneView />
              <Options />
            </div>
            <OutputPane />
          </main>
        </div>
        <footer className="h-[11px]" />
      </div>

      <svg className="pointer-events-none absolute top-[103px] left-[18px] h-[37px] w-[37px]" viewBox="0 0 37 37" fill="none">
        <circle cx="18.500" cy="18.500" r="16.500" stroke="#f4ee3c" strokeWidth="2.500" strokeOpacity=".85" />
        <path d="M18.500 19v8l1.800-1.600 1.500 3 1.200-.6-1.400-2.900h2.400z" fill="#fff" stroke="#222" strokeWidth=".7" />
      </svg>

      <div className="absolute top-[288px] left-[90px] flex h-[61px] w-[219px] items-center rounded-xs border border-[#8c8c8c] bg-white pl-[14px] shadow-md">
        <svg className="absolute -top-[16px] left-[52px] h-[17px] w-[24px]" viewBox="0 0 24 17">
          <path d="M10 17L1 1L23 17" fill="#fff" stroke="#999" strokeWidth=".8" />
          <path d="M10.500 16h11v1h-11z" fill="#fff" />
        </svg>
        <p className="font-['Liberation_Sans',sans-serif] text-[25px] leading-none whitespace-nowrap text-black">Imprint the faces</p>
      </div>
    </div>
  </div>
);

export default App;
